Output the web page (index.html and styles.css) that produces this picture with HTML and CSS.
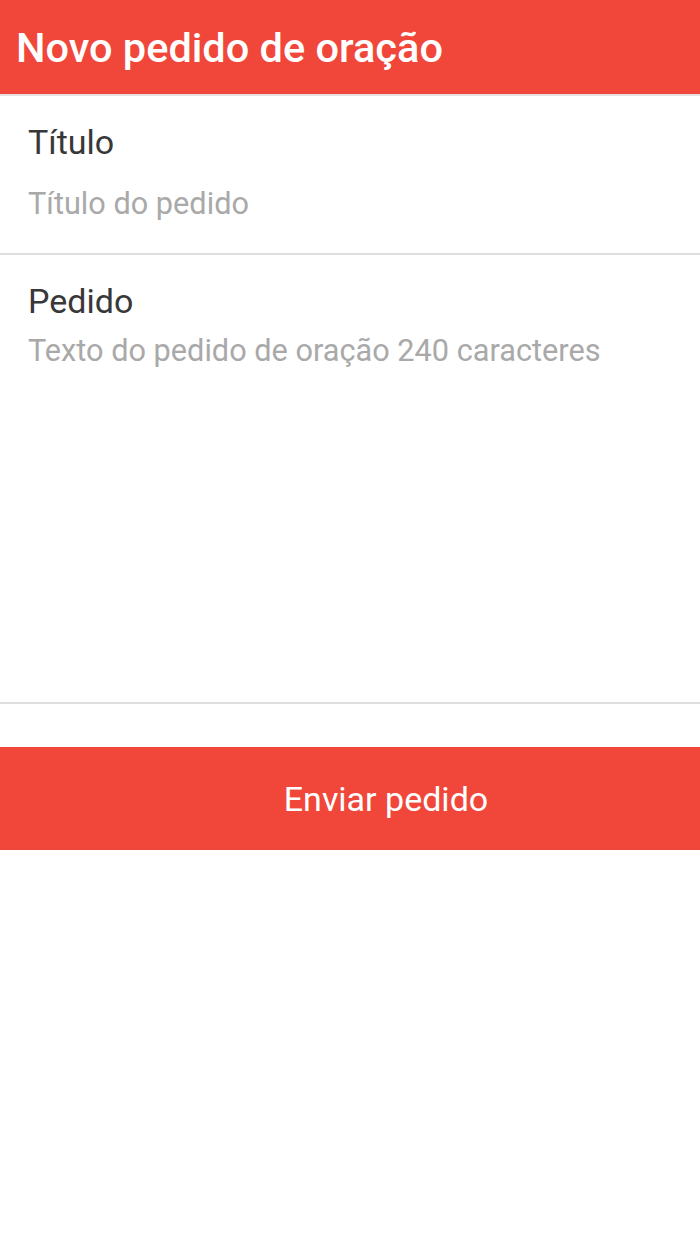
FILE: index.html
```
<!DOCTYPE html>
<html lang="pt">
<head>
    <meta charset="UTF-8">
    <meta name="viewport" content="width=device-width, initial-scale=1.0">
    <title>Novo pedido de oração</title>
    <link rel="stylesheet" href="styles.css">
</head>
<body>
    <div class="header">
        <h1>Novo pedido de oração</h1>
    </div>
    <form class="form">
        <div class="field">
            <label for="titulo">Título</label>
            <input type="text" id="titulo" placeholder="Título do pedido">
        </div>
        <div class="field field-text">
            <label for="pedido">Pedido</label>
            <textarea id="pedido" maxlength="240" placeholder="Texto do pedido de oração 240 caracteres"></textarea>
        </div>
        <button type="submit" class="send">Enviar pedido</button>
    </form>
</body>
</html>
```

FILE: styles.css
```
body {
    margin: 0;
    font-family: Roboto, "Noto Sans", sans-serif;
    background: #fff;
}
.header {
    background-color: #f1473a;
    height: 94px;
    border-bottom: 2px solid #e2e2e2;
    display: flex;
    align-items: center;
    padding: 0 16px;
}
.header h1 {
    margin: 0;
    color: #fff;
    font-size: 41.5px;
    font-weight: 500;
}
.form {
    margin: 0;
}
.field {
    padding: 26px 28px 0;
    border-bottom: 2px solid #dedede;
    height: 159px;
    box-sizing: border-box;
}
.field-text {
    height: 449px;
}
label {
    display: block;
    font-size: 34px;
    color: #383838;
    line-height: 40px;
}
input, textarea {
    display: block;
    width: 100%;
    border: none;
    outline: none;
    padding: 0;
    margin: 0;
    font-family: inherit;
    font-size: 30.7px;
    color: #383838;
    resize: none;
    background: transparent;
}
input {
    margin-top: 22px;
    height: 40px;
    line-height: 40px;
}
textarea {
    margin-top: 10px;
    height: 300px;
    line-height: 40px;
}
input::placeholder, textarea::placeholder {
    color: #a9a9a9;
}
.send {
    display: block;
    width: 100%;
    margin-top: 43px;
    height: 103px;
    border: none;
    background-color: #f1473a;
    color: #fff;
    font-family: inherit;
    font-size: 34px;
    padding: 0 0 0 72px;
}
```
